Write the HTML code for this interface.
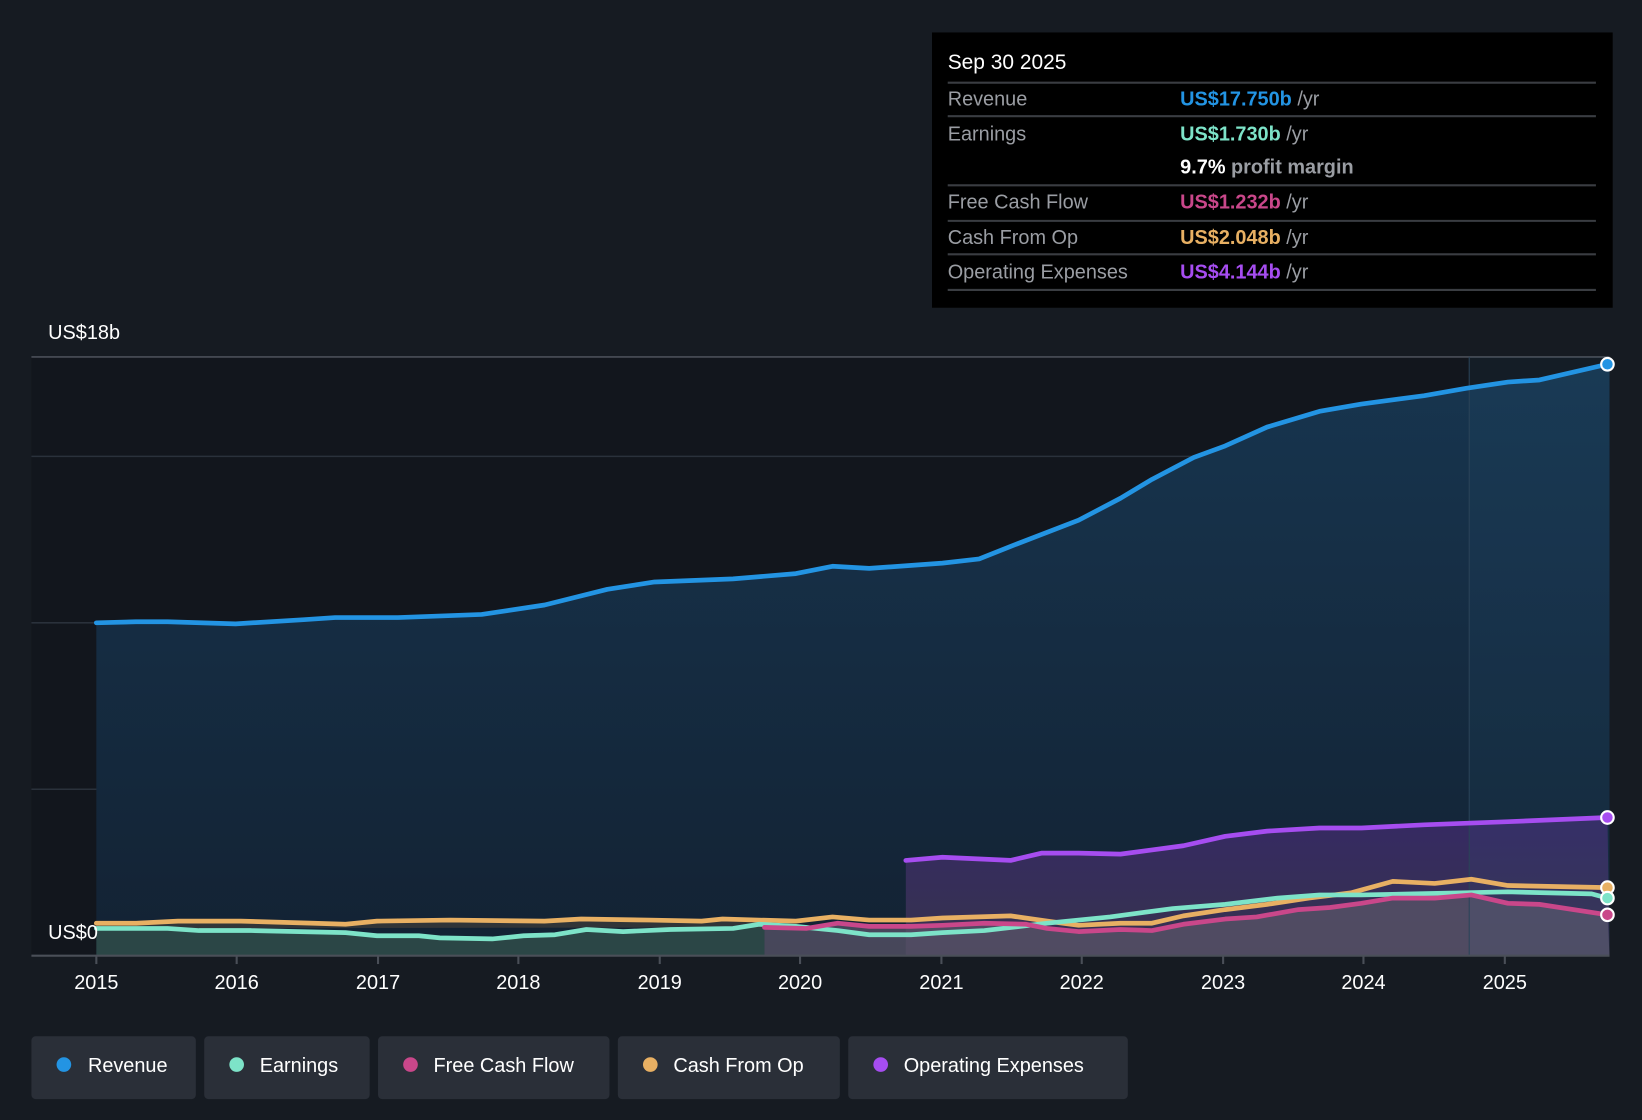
<!DOCTYPE html>
<html><head><meta charset="utf-8"><style>
html,body{margin:0;padding:0;background:#161b22;width:1642px;height:1120px;overflow:hidden}
svg{display:block}
text{font-family:"Liberation Sans",sans-serif}
</style></head><body>
<svg width="1642" height="1120" viewBox="0 0 1568 1070" preserveAspectRatio="none">
<defs>
<linearGradient id="rev" x1="0" y1="0" x2="0" y2="1"><stop offset="0" stop-color="#17354f"/><stop offset="1" stop-color="#132233"/></linearGradient>
<linearGradient id="opx" x1="0" y1="0" x2="0" y2="1"><stop offset="0" stop-color="#3a2a68"/><stop offset="1" stop-color="#3a3550"/></linearGradient>
</defs>
<rect width="1568" height="1070" fill="#161b22"/>
<rect x="30" y="341" width="1507" height="572" fill="#12161d"/>
<g stroke="#2a313b" stroke-width="1.5">
<line x1="30" y1="436" x2="1537" y2="436"/><line x1="30" y1="595" x2="1537" y2="595"/><line x1="30" y1="754" x2="1537" y2="754"/>
</g>
<line x1="30" y1="341" x2="1537" y2="341" stroke="#4a4f58" stroke-width="1.5"/>
<path d="M92,595 L130,594 160,594 225,596 290,592 320,590 380,590 460,587 520,578 580,563 625,556 700,553 760,548 795,541 830,543 900,538 935,534 965,522 1030,497 1070,476 1100,458 1140,437 1170,426 1210,408 1260,393 1300,386 1360,378 1400,371 1440,365 1470,363 1535,348 L1537,348 1537,913 92,913Z" fill="url(#rev)"/>
<path d="M865,822 L900,819 965,822 995,815 1030,815 1070,816 1100,812 1130,808 1170,799 1210,794 1260,791 1300,791 1360,788 1440,785 1535,781 L1537,913 865,913Z" fill="url(#opx)" opacity="0.9"/>
<path d="M92,887 L160,887 190,889 240,889 330,891 360,894 400,894 420,896 470,897 500,894 530,893 560,888 595,890 640,888 700,887 725,883 730,883 730,913 92,913Z" fill="#2f4a48" opacity="0.9"/>
<path d="M92,882 L130,882 170,880 230,880 300,882 330,883 360,880 430,879 520,880 555,878 620,879 670,880 690,878 730,879 730,886 92,887Z" fill="#3a3a3a" opacity="0.8"/>
<path d="M730,886 L770,887 800,882 830,885 870,885 900,884 940,882 980,883 1000,887 1030,890 1070,888 1100,889 1130,883 1170,878 1200,876 1240,869 1270,867 1300,863 1330,858 1370,858 1405,855 1440,863 1470,864 1535,874 L1537,913 730,913Z" fill="#5a5468" opacity="0.75"/>
<rect x="1403" y="341" width="134" height="572" fill="#3a7aa8" opacity="0.07"/>
<line x1="1403" y1="341" x2="1403" y2="913" stroke="#2a4358" stroke-width="1"/>
<g fill="none" stroke-width="4.5" stroke-linejoin="round" stroke-linecap="round">
<path stroke="#e8b063" d="M92,882 L130,882 170,880 230,880 300,882 330,883 360,880 430,879 520,880 555,878 620,879 670,880 690,878 760,880 795,876 830,879 870,879 900,877 965,875 1000,880 1030,884 1070,882 1100,882 1130,875 1170,869 1210,864 1250,858 1290,853 1330,842 1370,844 1405,840 1440,846 1535,848"/>
<path stroke="#7de3c8" d="M92,887 L160,887 190,889 240,889 330,891 360,894 400,894 420,896 470,897 500,894 530,893 560,888 595,890 640,888 700,887 725,883 760,885 800,889 830,893 870,893 900,891 940,889 1000,882 1060,876 1120,868 1170,864 1220,858 1260,855 1300,855 1350,854 1440,852 1520,854 1535,858"/>
<path stroke="#c9478a" d="M730,886 L770,887 800,882 830,885 870,885 900,884 940,882 980,883 1000,887 1030,890 1070,888 1100,889 1130,883 1170,878 1200,876 1240,869 1270,867 1300,863 1330,858 1370,858 1405,855 1440,863 1470,864 1535,874"/>
<path stroke="#a64df0" d="M865,822 L900,819 965,822 995,815 1030,815 1070,816 1100,812 1130,808 1170,799 1210,794 1260,791 1300,791 1360,788 1440,785 1535,781"/>
<path stroke="#2394e3" d="M92,595 L130,594 160,594 225,596 290,592 320,590 380,590 460,587 520,578 580,563 625,556 700,553 760,548 795,541 830,543 900,538 935,534 965,522 1030,497 1070,476 1100,458 1140,437 1170,426 1210,408 1260,393 1300,386 1360,378 1400,371 1440,365 1470,363 1535,348"/>
</g>
<g stroke="#fff" stroke-width="2">
<circle cx="1535" cy="348" r="6" fill="#2394e3"/><circle cx="1535" cy="781" r="6" fill="#a64df0"/>
<circle cx="1535" cy="848" r="6" fill="#e8b063"/><circle cx="1535" cy="858" r="6" fill="#7de3c8"/><circle cx="1535" cy="874" r="6" fill="#c9478a"/>
</g>
<line x1="30" y1="913" x2="1537" y2="913" stroke="#4a4f58" stroke-width="2"/>
<g stroke="#4a4f58" stroke-width="2">
<line x1="92" y1="913" x2="92" y2="921"/><line x1="226" y1="913" x2="226" y2="921"/><line x1="361" y1="913" x2="361" y2="921"/><line x1="495" y1="913" x2="495" y2="921"/><line x1="630" y1="913" x2="630" y2="921"/><line x1="764" y1="913" x2="764" y2="921"/><line x1="899" y1="913" x2="899" y2="921"/><line x1="1033" y1="913" x2="1033" y2="921"/><line x1="1168" y1="913" x2="1168" y2="921"/><line x1="1302" y1="913" x2="1302" y2="921"/><line x1="1437" y1="913" x2="1437" y2="921"/>
</g>
<g fill="#fff" font-size="19" text-anchor="middle">
<text x="92" y="945">2015</text><text x="226" y="945">2016</text><text x="361" y="945">2017</text><text x="495" y="945">2018</text><text x="630" y="945">2019</text><text x="764" y="945">2020</text><text x="899" y="945">2021</text><text x="1033" y="945">2022</text><text x="1168" y="945">2023</text><text x="1302" y="945">2024</text><text x="1437" y="945">2025</text>
</g>
<text x="46" y="324" fill="#fff" font-size="19">US$18b</text>
<text x="46" y="897" fill="#fff" font-size="19">US$0</text>
<rect x="890" y="31" width="650" height="263" fill="#000"/>
<text x="905" y="66" fill="#fff" font-size="20">Sep 30 2025</text>
<g stroke="#3a3d42" stroke-width="2">
<line x1="905" y1="79" x2="1524" y2="79"/><line x1="905" y1="111" x2="1524" y2="111"/><line x1="905" y1="177" x2="1524" y2="177"/><line x1="905" y1="211" x2="1524" y2="211"/><line x1="905" y1="243" x2="1524" y2="243"/><line x1="905" y1="277" x2="1524" y2="277"/>
</g>
<g font-size="19" fill="#9a9da3">
<text x="905" y="101">Revenue</text><text x="905" y="134">Earnings</text><text x="905" y="199">Free Cash Flow</text><text x="905" y="233">Cash From Op</text><text x="905" y="266">Operating Expenses</text>
<text x="1127" y="101"><tspan fill="#2394e3" font-weight="bold">US$17.750b</tspan> /yr</text>
<text x="1127" y="134"><tspan fill="#7de3c8" font-weight="bold">US$1.730b</tspan> /yr</text>
<text x="1127" y="166" font-weight="bold"><tspan fill="#fff">9.7%</tspan> profit margin</text>
<text x="1127" y="199"><tspan fill="#c9478a" font-weight="bold">US$1.232b</tspan> /yr</text>
<text x="1127" y="233"><tspan fill="#e8b063" font-weight="bold">US$2.048b</tspan> /yr</text>
<text x="1127" y="266"><tspan fill="#a64df0" font-weight="bold">US$4.144b</tspan> /yr</text>
</g>
<g fill="#2a2f38">
<rect x="30" y="990" width="157" height="60" rx="4"/><rect x="195" y="990" width="158" height="60" rx="4"/><rect x="361" y="990" width="221" height="60" rx="4"/><rect x="590" y="990" width="212" height="60" rx="4"/><rect x="810" y="990" width="267" height="60" rx="4"/>
</g>
<circle cx="61" cy="1017" r="7" fill="#2394e3"/><circle cx="226" cy="1017" r="7" fill="#7de3c8"/><circle cx="392" cy="1017" r="7" fill="#c9478a"/><circle cx="621" cy="1017" r="7" fill="#e8b063"/><circle cx="841" cy="1017" r="7" fill="#a64df0"/>
<g fill="#fff" font-size="19">
<text x="84" y="1024">Revenue</text><text x="248" y="1024">Earnings</text><text x="414" y="1024">Free Cash Flow</text><text x="643" y="1024">Cash From Op</text><text x="863" y="1024">Operating Expenses</text>
</g>
</svg>
</body></html>
